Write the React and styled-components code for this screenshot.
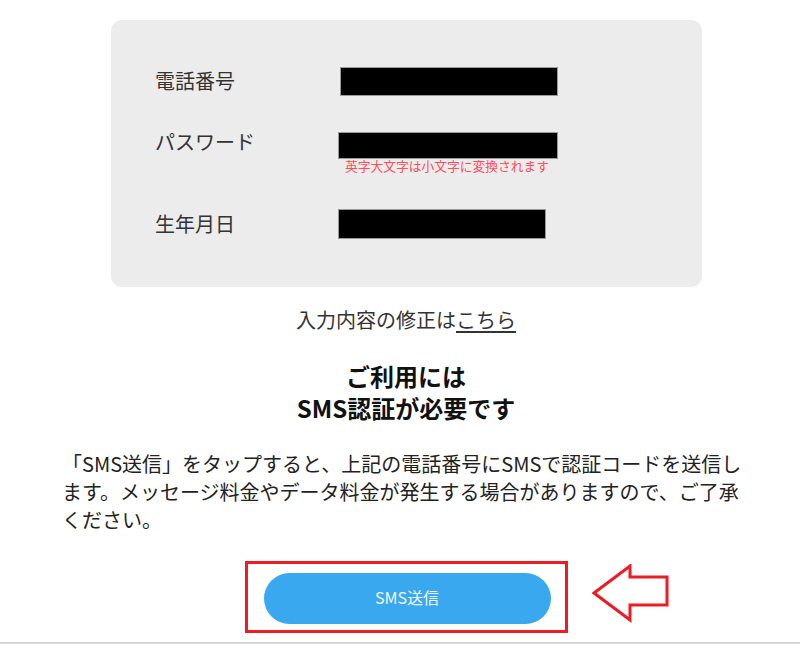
import React from 'react';
import styled, { createGlobalStyle } from 'styled-components';

const GlobalStyle = createGlobalStyle`
    body {
        margin: 0;
        background: #fff;
        font-family: "Noto Sans CJK JP", "Noto Sans", sans-serif;
        color: #222;
    }
`;

const StyledPage = styled.div`
    width: 800px;
    height: 647px;
    overflow: hidden;
    display: flex;
    flex-direction: column;
`;
const StyledContent = styled.div`
    width: 688px;
    padding: 20px 50px 0 62px;
    display: flex;
    flex-direction: column;
`;
const StyledCard = styled.div`
    margin: 0 48px 0 49px;
    padding: 47px 0 48px 44px;
    background: #ececec;
    border-radius: 11px;
    display: flex;
    flex-direction: column;
`;
const StyledRow = styled.div`
    display: flex;
    align-items: flex-start;
    margin-top: ${p => p.$gap || 0}px;
`;
const StyledLabel = styled.div`
    width: ${p => p.$width}px;
    height: ${p => p.$height}px;
    display: flex;
    align-items: center;
    font-size: 20px;
    color: #333;
`;
const StyledValue = styled.div`
    display: flex;
    flex-direction: column;
    align-items: flex-start;
`;
const StyledMask = styled.div`
    width: ${p => p.$width}px;
    height: ${p => p.$height}px;
    background: #000;
    border: 1px solid #999;
    box-sizing: border-box;
`;
const StyledNote = styled.div`
    margin-left: 7px;
    font-size: 12.75px;
    line-height: 14px;
    color: #ff4d5a;
`;
const StyledFixLine = styled.p`
    margin: 19px 0 0;
    text-align: center;
    font-size: 20px;
    line-height: 28px;
    color: #333;
`;
const StyledFixLink = styled.a`
    color: #333;
    text-decoration: underline;
    text-underline-offset: 3px;
`;
const StyledHeading = styled.h2`
    margin: 26px 0 0;
    text-align: center;
    font-size: 24px;
    line-height: 32px;
    font-weight: 700;
    color: #111;
`;
const StyledText = styled.p`
    margin: 26px 0 0;
    font-size: 20px;
    line-height: 28px;
    color: #222;
`;
const StyledActionRow = styled.div`
    margin-top: 27px;
    padding: 0 50px 0 62px;
    display: grid;
    grid-template-columns: 1fr auto 1fr;
    align-items: start;
`;
const StyledHighlight = styled.div`
    grid-column: 2;
    width: 323px;
    height: 72px;
    box-sizing: border-box;
    border: 3px solid #ed1c24;
    padding: 9px 0 0 16px;
`;
const StyledButton = styled.button`
    width: 287px;
    height: 51px;
    border: none;
    border-radius: 26px;
    background: #3aa8ef;
    color: #f2f8ff;
    font-family: inherit;
    font-size: 16px;
    padding-bottom: 4px;
    cursor: pointer;
`;
const StyledArrow = styled.svg`
    grid-column: 3;
    margin: 3px 0 0 24px;
`;
const StyledDivider = styled.div`
    margin-top: 9px;
    height: 2px;
    background: #d6d6d6;
`;

const App = () =>
    <>
        <GlobalStyle />
        <StyledPage>
            <StyledContent>
                <StyledCard>
                    <StyledRow>
                        <StyledLabel $width={185} $height={27}>{'電話番号'}</StyledLabel>
                        <StyledMask $width={218} $height={29} />
                    </StyledRow>
                    <StyledRow $gap={36}>
                        <StyledLabel $width={183} $height={18}>{'パスワード'}</StyledLabel>
                        <StyledValue>
                            <StyledMask $width={220} $height={27} />
                            <StyledNote>{'英字大文字は小文字に変換されます'}</StyledNote>
                        </StyledValue>
                    </StyledRow>
                    <StyledRow $gap={36}>
                        <StyledLabel $width={183} $height={28}>{'生年月日'}</StyledLabel>
                        <StyledMask $width={208} $height={30} />
                    </StyledRow>
                </StyledCard>
                <StyledFixLine>
                    {'入力内容の修正は'}
                    <StyledFixLink>{'こちら'}</StyledFixLink>
                </StyledFixLine>
                <StyledHeading>
                    {'ご利用には'}<br />{'SMS認証が必要です'}
                </StyledHeading>
                <StyledText>
                    {'「SMS送信」をタップすると、上記の電話番号にSMSで認証コードを送信します。メッセージ料金やデータ料金が発生する場合がありますので、ご了承ください。'}
                </StyledText>
            </StyledContent>
            <StyledActionRow>
                <StyledHighlight>
                    <StyledButton>{'SMS送信'}</StyledButton>
                </StyledHighlight>
                <StyledArrow width="80" height="60" viewBox="0 0 80 60">
                    <path d="M2 29 L38 2 L38 13 L75 13 L75 41 L38 41 L38 56 Z"
                        fill="none" stroke="#ed1c24" strokeWidth="3" strokeLinejoin="miter" />
                </StyledArrow>
            </StyledActionRow>
            <StyledDivider />
        </StyledPage>
    </>;
export default App;
